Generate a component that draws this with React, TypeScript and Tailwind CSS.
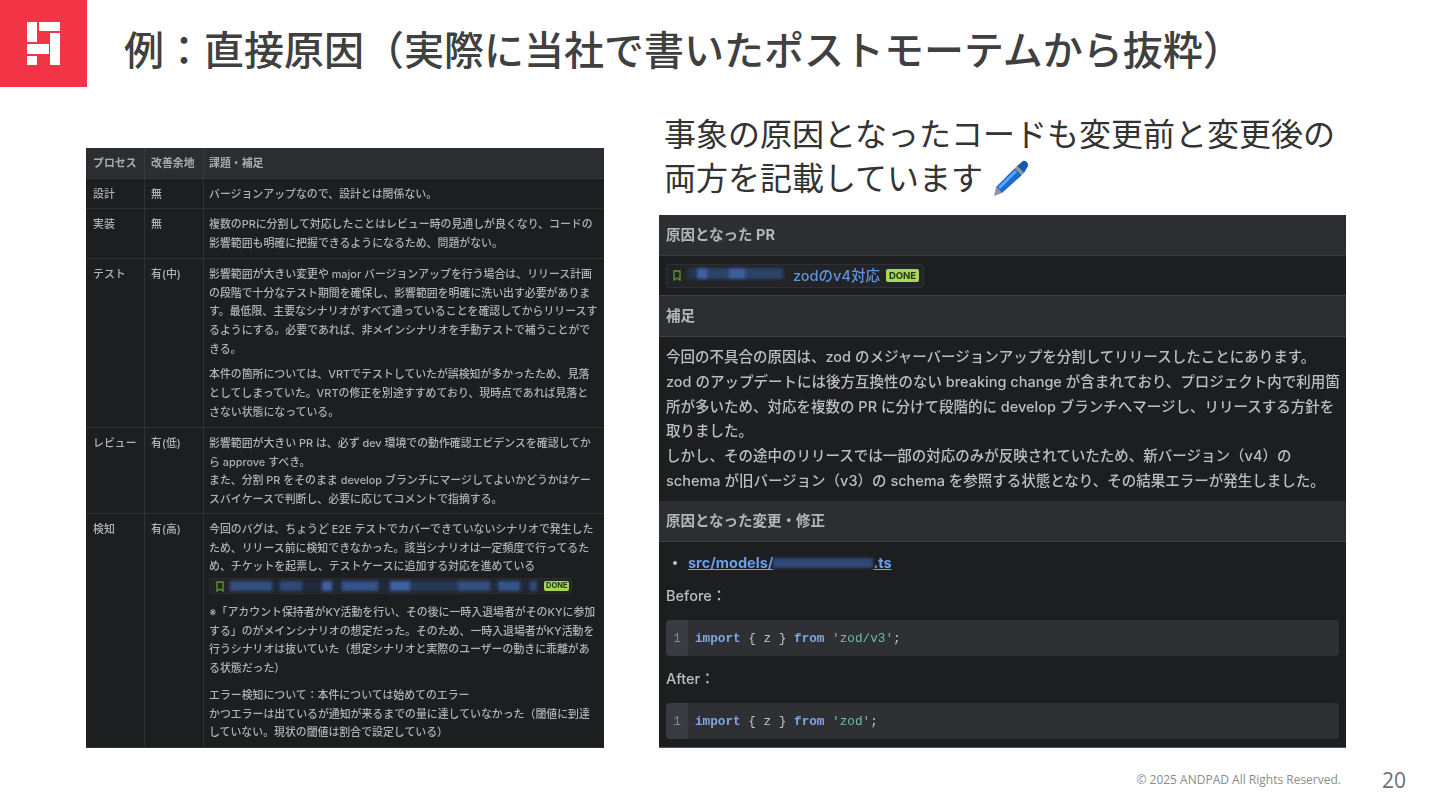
const tableRows = [
  { h: "h-[30px]", process: "設計", room: "無", paras: [["バージョンアップなので、設計とは関係ない。"]] },
  {
    h: "h-[50px]",
    process: "実装",
    room: "無",
    paras: [["複数のPRに分割して対応したことはレビュー時の見通しが良くなり、コードの", "影響範囲も明確に把握できるようになるため、問題がない。"]],
  },
  {
    h: "h-[169px]",
    process: "テスト",
    room: "有(中)",
    paras: [
      [
        "影響範囲が大きい変更や major バージョンアップを行う場合は、リリース計画",
        "の段階で十分なテスト期間を確保し、影響範囲を明確に洗い出す必要がありま",
        "す。最低限、主要なシナリオがすべて通っていることを確認してからリリースす",
        "るようにする。必要であれば、非メインシナリオを手動テストで補うことがで",
        "きる。",
      ],
      [
        "本件の箇所については、VRTでテストしていたが誤検知が多かったため、見落",
        "としてしまっていた。VRTの修正を別途すすめており、現時点であれば見落と",
        "さない状態になっている。",
      ],
    ],
  },
  {
    h: "h-[86px]",
    process: "レビュー",
    room: "有(低)",
    paras: [
      [
        "影響範囲が大きい PR は、必ず dev 環境での動作確認エビデンスを確認してか",
        "ら approve すべき。",
        "また、分割 PR をそのまま develop ブランチにマージしてよいかどうかはケー",
        "スバイケースで判断し、必要に応じてコメントで指摘する。",
      ],
    ],
  },
];

const detectParas = {
  before: [
    "今回のバグは、ちょうど E2E テストでカバーできていないシナリオで発生した",
    "ため、リリース前に検知できなかった。該当シナリオは一定頻度で行ってるた",
    "め、チケットを起票し、テストケースに追加する対応を進めている",
  ],
  note: [
    "※「アカウント保持者がKY活動を行い、その後に一時入退場者がそのKYに参加",
    "する」のがメインシナリオの想定だった。そのため、一時入退場者がKY活動を",
    "行うシナリオは抜いていた（想定シナリオと実際のユーザーの動きに乖離があ",
    "る状態だった）",
  ],
  error: [
    "エラー検知について：本件については始めてのエラー",
    "かつエラーは出ているが通知が来るまでの量に達していなかった（閾値に到達",
    "していない。現状の閾値は割合で設定している）",
  ],
};

const stripBlur = [
  ["w-[42px]", "bg-[#34507f]"],
  ["w-[8px]", "bg-[#1f2a3d]"],
  ["w-[22px]", "bg-[#2f4a78]"],
  ["w-[20px]", "bg-[#1f2a3d]"],
  ["w-[10px]", "bg-[#3d61a3]"],
  ["w-[10px]", "bg-[#1f2a3d]"],
  ["w-[36px]", "bg-[#35548c]"],
  ["w-[12px]", "bg-[#1f2a3d]"],
  ["w-[20px]", "bg-[#3d61a3]"],
  ["w-[48px]", "bg-[#263954]"],
  ["w-[32px]", "bg-[#34507f]"],
  ["w-[8px]", "bg-[#1f2a3d]"],
  ["w-[22px]", "bg-[#35548c]"],
  ["w-[10px]", "bg-[#1f2a3d]"],
  ["w-[7px]", "bg-[#2f4a78]"],
];

function Logo() {
  return (
    <div className="flex h-[87px] w-[87px] shrink-0 items-center justify-center bg-[#f23546]">
      <svg width="87" height="87" viewBox="0 0 87 87" fill="#ffffff">
        <rect x="27" y="22" width="10" height="20" />
        <rect x="39" y="22" width="21" height="9" />
        <rect x="27" y="44" width="22" height="10" />
        <rect x="27" y="56" width="10" height="9" />
        <rect x="50" y="33" width="10" height="32" />
      </svg>
    </div>
  );
}

function Bookmark() {
  return (
    <svg width="8" height="11" viewBox="0 0 8 11" fill="none" stroke="#5f9a2c" strokeWidth="1.3" className="shrink-0">
      <path d="M1 1h6v9L4 8 1 10z" />
    </svg>
  );
}

function Pen() {
  return (
    <svg width="38" height="38" viewBox="0 0 38 38" className="ml-[10px] inline-block align-[-7px]">
      <path d="M1 37l2-9 6 6z" fill="#8f98a0" />
      <path d="M3 28L22 9l7 7L9 34z" fill="#1a6ad2" />
      <path d="M5 28L22 11l2 2L7 30z" fill="#5aa6f2" />
      <path d="M22 9l2-2 7 7-2 2z" fill="#8d9a7a" />
      <path d="M24 7l6-5c2-1.5 6 2 5 5l-4 7z" fill="#1558b0" />
    </svg>
  );
}

function Lines({ lines }: { lines: string[] }) {
  return (
    <>
      {lines.map((line) => (
        <div key={line} className="h-[18.7px] whitespace-nowrap">
          {line}
        </div>
      ))}
    </>
  );
}

function LeftRow({ h, process, room, children }: { h: string; process: string; room: string; children: React.ReactNode }) {
  return (
    <div className={`flex border-b border-[#303135] ${h}`}>
      <div className="w-[59px] shrink-0 border-r border-[#303135] pt-[6px] pl-[7px]">{process}</div>
      <div className="w-[59px] shrink-0 border-r border-[#303135] pt-[6px] pl-[6px]">{room}</div>
      <div className="pt-[6px] pl-[5px]">{children}</div>
    </div>
  );
}

function LeftTable() {
  return (
    <div className="mt-[61px] h-[600px] w-[518px] shrink-0 overflow-hidden bg-[#1d1e20] font-['Inter','Noto_Sans_CJK_JP',sans-serif] text-[10.9px] leading-[18.7px] font-medium text-[#b0b2b5] blur-[0.3px]">
      <div className="flex h-[31px] items-stretch border-b border-[#38393d] bg-[#2c2d30] font-bold text-[#a9abaf]">
        <div className="flex w-[59px] items-center border-r border-[#38393d] pl-[7px]">プロセス</div>
        <div className="flex w-[59px] items-center border-r border-[#38393d] pl-[6px]">改善余地</div>
        <div className="flex items-center pl-[5px]">課題・補足</div>
      </div>
      {tableRows.map((row) => (
        <LeftRow key={row.process} h={row.h} process={row.process} room={row.room}>
          {row.paras.map((lines, i) => (
            <div key={i} className={i > 0 ? "mt-[7px]" : ""}>
              <Lines lines={lines} />
            </div>
          ))}
        </LeftRow>
      ))}
      <LeftRow h="h-[234px]" process="検知" room="有(高)">
        <Lines lines={detectParas.before} />
        <div className="mt-[2px] flex h-[16px] w-[363px] items-center rounded-[2px] border border-[#2b2d31] bg-[#232428] pl-[6px]">
          <Bookmark />
          <div className="ml-[6px] flex h-[10px] w-[312px] blur-[1.5px]">
            {stripBlur.map(([w, c], i) => (
              <div key={i} className={`${w} ${c}`} />
            ))}
          </div>
          <span className="ml-[2px] rounded-[2px] bg-[#a3d656] px-[2px] text-[7.5px] leading-[10px] font-bold text-[#27331a]">DONE</span>
        </div>
        <div className="mt-[9px]">
          <Lines lines={detectParas.note} />
        </div>
        <div className="mt-[8px]">
          <Lines lines={detectParas.error} />
        </div>
      </LeftRow>
    </div>
  );
}

function SectionHead({ children }: { children: React.ReactNode }) {
  return (
    <div className="flex h-[41px] items-center border-b border-[#3d3e43] bg-[#2d2e31] pl-[7px] text-[14.5px] font-bold text-[#b4b6b9]">
      {children}
    </div>
  );
}

function CodeBlock({ source }: { source: string }) {
  return (
    <div className="mx-[7px] flex h-[36px] items-center overflow-hidden rounded-[4px] bg-[#2f3034] font-['Liberation_Mono',monospace] text-[12.7px] font-normal">
      <div className="flex h-full w-[22px] items-center justify-center bg-[#3a3b40] pt-[1px] text-[#85878b]">1</div>
      <div className="pt-[1px] pl-[7px] text-[#c3c5c8]">
        <span className="font-bold text-[#7ea7e6]">import</span> {"{ z }"} <span className="font-bold text-[#7ea7e6]">from</span>{" "}
        <span className="text-[#6fbf9a]">'{source}'</span>;
      </div>
    </div>
  );
}

function RightPanel() {
  return (
    <div className="mt-[15px] h-[533px] overflow-hidden border-b border-[#55565a] bg-[#1d1e20] font-['Inter','Noto_Sans_CJK_JP',sans-serif] text-[14.5px] font-medium text-[#bcbec1] blur-[0.3px]">
      <SectionHead>原因となった PR</SectionHead>
      <div className="flex h-[40px] items-center border-b border-[#3d3e43] pl-[7px]">
        <div className="flex h-[24px] w-[258px] items-center rounded-[3px] border border-[#2f3034] bg-[#232428] pl-[6px]">
          <Bookmark />
          <div className="mb-[4px] ml-[6px] flex h-[11px] w-[96px] blur-[1.5px]">
            <div className="w-[10px] bg-[#23344f]" />
            <div className="w-[10px] bg-[#3d61a3]" />
            <div className="w-[22px] bg-[#2c4368]" />
            <div className="w-[16px] bg-[#3d5f9e]" />
            <div className="w-[38px] bg-[#2c4368]" />
          </div>
          <span className="ml-[10px] pt-[1px] text-[#5f94e0]">zodのv4対応</span>
          <span className="ml-[6px] rounded-[2px] bg-[#a5d955] px-[3px] text-[9.5px] leading-[13px] font-bold text-[#27331a]">DONE</span>
        </div>
      </div>
      <SectionHead>補足</SectionHead>
      <div className="h-[164px] pt-[8px] pl-[7px] leading-[24.8px] whitespace-nowrap">
        <div>今回の不具合の原因は、zod のメジャーバージョンアップを分割してリリースしたことにあります。</div>
        <div>zod のアップデートには後方互換性のない breaking change が含まれており、プロジェクト内で利用箇</div>
        <div>所が多いため、対応を複数の PR に分けて段階的に develop ブランチへマージし、リリースする方針を</div>
        <div>取りました。</div>
        <div>しかし、その途中のリリースでは一部の対応のみが反映されていたため、新バージョン（v4）の</div>
        <div>schema が旧バージョン（v3）の schema を参照する状態となり、その結果エラーが発生しました。</div>
      </div>
      <SectionHead>原因となった変更・修正</SectionHead>
      <div className="flex h-[40px] items-center pt-[2px] pl-[14px] font-bold text-[#6b9ff0]">
        <span className="h-[4px] w-[4px] rounded-full bg-[#c0c2c5]" />
        <span className="ml-[11px] underline">src/models/</span>
        <span className="h-[10px] w-[100px] bg-[#2f4a78] blur-[1.5px]" />
        <span className="underline">.ts</span>
      </div>
      <div className="h-[38px] pl-[7px] leading-[28px]">Before：</div>
      <CodeBlock source="zod/v3" />
      <div className="h-[47px] pl-[7px] leading-[46px]">After：</div>
      <CodeBlock source="zod" />
    </div>
  );
}

export default function App() {
  return (
    <div className="flex h-[810px] w-[1440px] flex-col overflow-hidden bg-white font-['Liberation_Sans','Noto_Sans_CJK_JP',sans-serif] [text-spacing-trim:space-all]">
      <header className="flex h-[87px] shrink-0 items-center">
        <Logo />
        <h1 className="mt-[9px] ml-[37px] font-['Noto_Sans_CJK_JP',sans-serif] text-[40px] leading-[50px] font-medium whitespace-nowrap text-[#404040]">
          例：直接原因（実際に当社で書いたポストモーテムから抜粋）
        </h1>
      </header>
      <main className="flex h-[661px] shrink-0 pl-[86px]">
        <LeftTable />
        <div className="ml-[55px] w-[687px] shrink-0">
          <div className="mt-[23px] h-[90px] pl-[5px] font-['Noto_Sans_CJK_JP',sans-serif] text-[32px] leading-[45px] whitespace-nowrap text-[#333333]">
            <div>事象の原因となったコードも変更前と変更後の</div>
            <div className="-mt-[1px]">
              両方を記載しています
              <Pen />
            </div>
          </div>
          <RightPanel />
        </div>
      </main>
      <footer className="flex items-center justify-end pt-[18px] pr-[34px] font-['Open_Sans',sans-serif] text-[#8b8b8b]">
        <span className="text-[12px]">© 2025 ANDPAD All Rights Reserved.</span>
        <span className="ml-[41px] text-[21px] leading-[28px] text-[#6f6f6f]">20</span>
      </footer>
    </div>
  );
}
